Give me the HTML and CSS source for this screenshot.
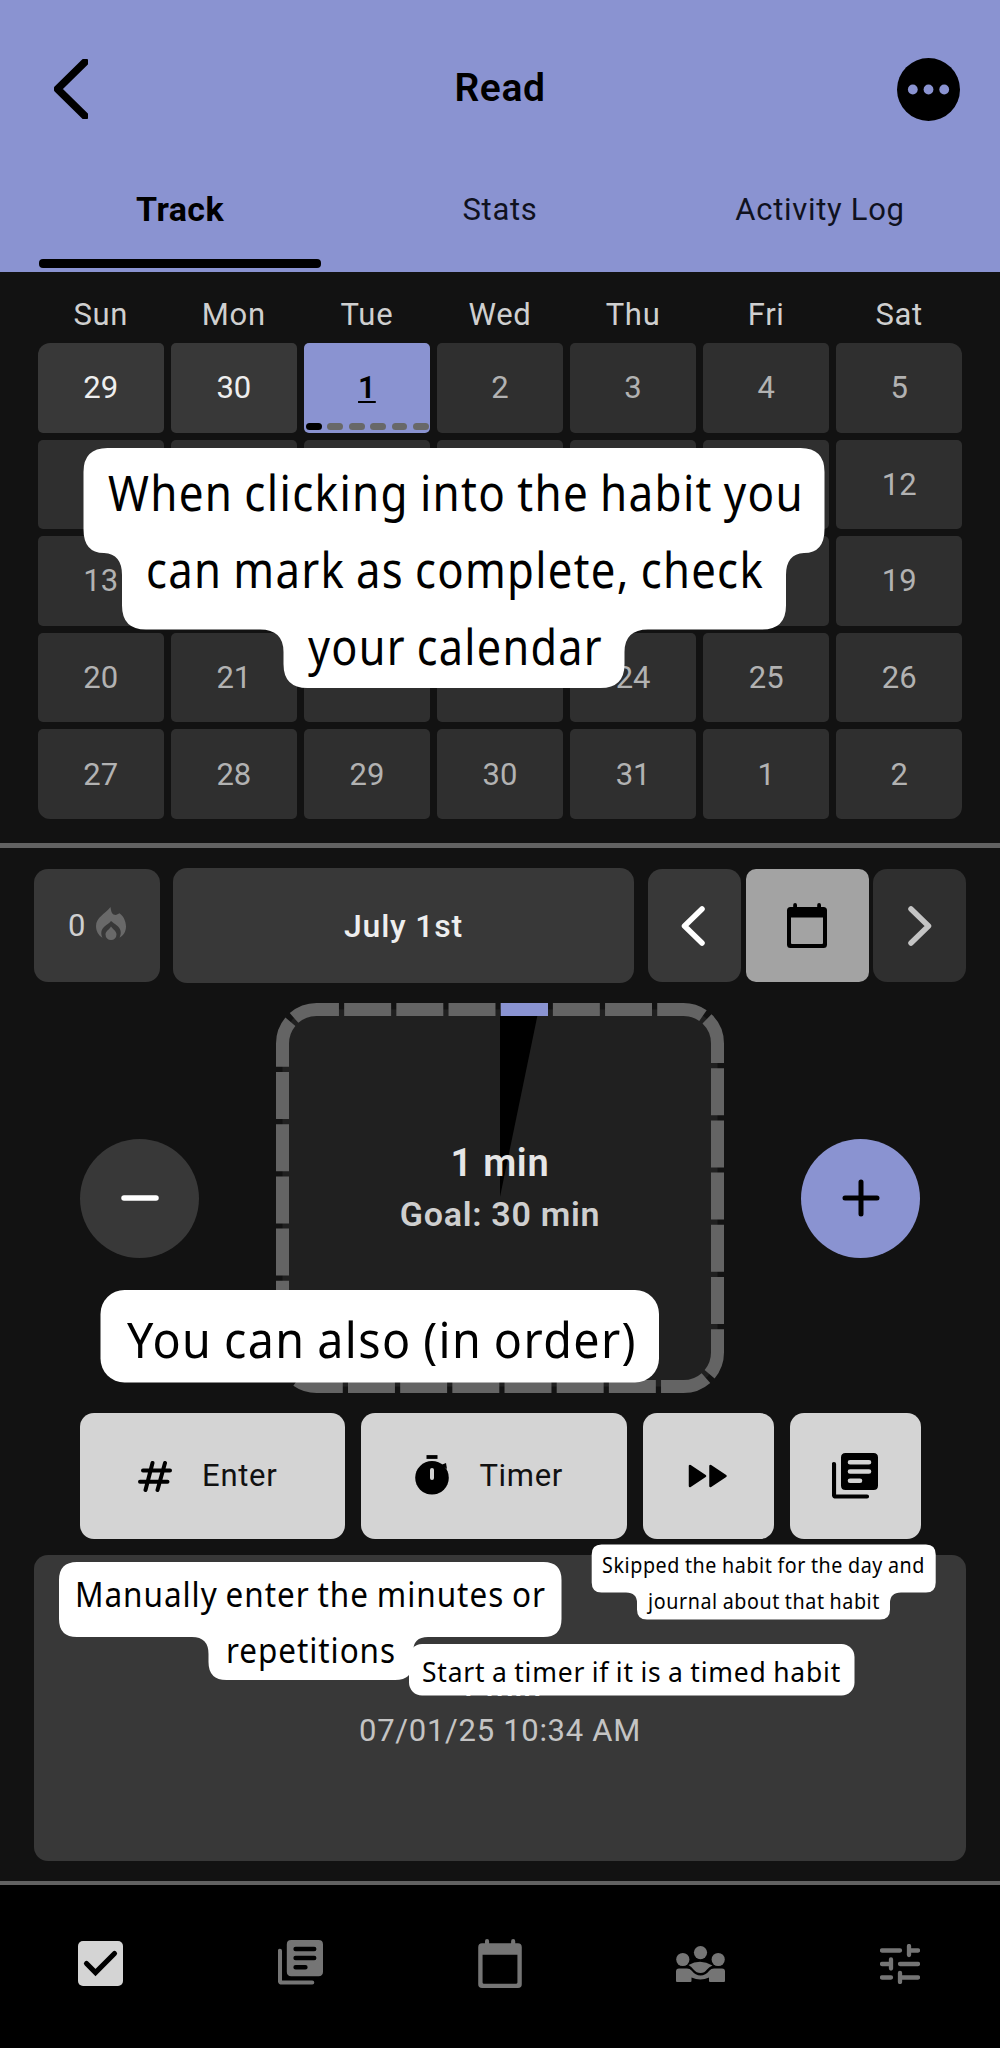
FILE: index.html
```html
<!DOCTYPE html>
<html lang="en">
<head>
<meta charset="utf-8">
<title>Read</title>
<link rel="stylesheet" href="styles.css">
</head>
<body>
<svg class="defs" width="0" height="0">
  <symbol id="library" viewBox="0 0 46 46">
    <path d="M2 11V41.500Q2 43.500 4 43.500H35" fill="none" stroke="currentColor" stroke-width="4.200" stroke-linecap="round" stroke-linejoin="round"/>
    <path fill="currentColor" fill-rule="evenodd" d="M13.500 0H41.500Q46 0 46 4.500V32.500Q46 37 41.500 37H13.500Q9 37 9 32.500V4.500Q9 0 13.500 0ZM18 6.900a2.300 2.300 0 0 0 0 4.600H37a2.300 2.300 0 0 0 0-4.600ZM18 16.200a2.300 2.300 0 0 0 0 4.600H37a2.300 2.300 0 0 0 0-4.600ZM18 25.500a2.300 2.300 0 0 0 0 4.600H28a2.300 2.300 0 0 0 0-4.600Z"/>
  </symbol>
  <symbol id="calendar" viewBox="0 0 40 45">
    <path fill="currentColor" fill-rule="evenodd" d="M6.200 4V2a1.900 1.900 0 0 1 3.800 0V4H30.200V2a1.900 1.900 0 0 1 3.800 0V4H36.500Q40 4 40 7.500V41.500Q40 45 36.500 45H3.500Q0 45 0 41.500V7.500Q0 4 3.500 4ZM4 14.500V40Q4 41 5 41H35Q36 41 36 40V14.500Z"/>
  </symbol>
</svg>

<header class="header">
  <div class="topbar">
    <svg class="back" width="34" height="60" viewBox="0 0 34 60"><path d="M31 3L3.500 30L31 57"/></svg>
    <h1 class="title">Read</h1>
    <svg class="more" width="63" height="63" viewBox="0 0 63 63"><circle cx="31.500" cy="31.500" r="31.500"/><g class="dots"><circle cx="15.800" cy="31.500" r="4.900"/><circle cx="31.500" cy="31.500" r="4.900"/><circle cx="47.200" cy="31.500" r="4.900"/></g></svg>
  </div>
  <nav class="tabs">
    <span class="tab active">Track</span>
    <span class="tab">Stats</span>
    <span class="tab">Activity Log</span>
  </nav>
</header>

<section class="month">
  <div class="weekdays"><span>Sun</span><span>Mon</span><span>Tue</span><span>Wed</span><span>Thu</span><span>Fri</span><span>Sat</span></div>
  <div class="days">
    <span class="day past">29</span><span class="day past">30</span>
    <span class="day today"><b>1</b><span class="ticks"><i class="done"></i><i></i><i></i><i></i><i></i><i></i></span></span>
    <span class="day">2</span><span class="day">3</span><span class="day">4</span><span class="day">5</span>
    <span class="day">6</span><span class="day">7</span><span class="day">8</span><span class="day">9</span><span class="day">10</span><span class="day">11</span><span class="day">12</span>
    <span class="day">13</span><span class="day">14</span><span class="day">15</span><span class="day">16</span><span class="day">17</span><span class="day">18</span><span class="day">19</span>
    <span class="day">20</span><span class="day">21</span><span class="day">22</span><span class="day">23</span><span class="day">24</span><span class="day">25</span><span class="day">26</span>
    <span class="day">27</span><span class="day">28</span><span class="day">29</span><span class="day">30</span><span class="day">31</span><span class="day">1</span><span class="day">2</span>
  </div>
</section>

<main class="tracker">
  <div class="datebar">
    <div class="streak">0
      <svg width="30" height="33" viewBox="0 0 30 33"><path fill="#696969" d="M14.500 0C15 3.500 15.500 7 18.500 7.800C20.500 8.200 22 7 23.500 6.200C27.500 9 30 14.500 30 19.500C30 24.500 27.500 28.500 23.500 30.800C26 25.500 24.500 21.500 21.500 19C18.500 16.500 16 15 15 14C13.500 16 11 17.500 8.500 19.500C5 22.500 4.500 26.500 6.500 30.800C2.500 28.500 0 24 0 19C0 10.500 9 7 14.500 0ZM15 19.500C17 22.500 20.500 24 20.500 27.500A5.500 5.500 0 0 1 9.500 27.500C9.500 24 13.500 22.500 15 19.500Z"/></svg>
    </div>
    <div class="date">July 1st</div>
    <div class="switcher">
      <div class="prev"><svg width="24" height="40" viewBox="0 0 24 40"><path d="M21 3L3.500 20L21 37"/></svg></div>
      <div class="pick"><svg width="40" height="45"><use href="#calendar"/></svg></div>
      <div class="next"><svg width="24" height="40" viewBox="0 0 24 40"><path d="M3 3L20.500 20L3 37"/></svg></div>
    </div>
  </div>

  <div class="counter">
    <div class="round minus"><svg width="40" height="40" viewBox="0 0 40 40"><path d="M4 20H36"/></svg></div>
    <div class="dial">
      <svg class="ring" width="448" height="390" viewBox="0 0 448 390">
        <rect x="6.500" y="6.500" width="435" height="377" rx="34" fill="#202020"/>
        <path d="M224 6.500H262.700L224 194Z" fill="#000"/>
        <path class="segments" d="M224.700 6.500H407.500A34 34 0 0 1 441.500 40.500V349.500A34 34 0 0 1 407.500 383.500H40.500A34 34 0 0 1 6.500 349.500V40.500A34 34 0 0 1 40.500 6.500H224.700" pathLength="300" stroke-dasharray="9 1"/>
        <path class="segment-done" d="M224.800 6.500H272"/>
      </svg>
      <div class="readout"><strong>1 min</strong><span>Goal: 30 min</span></div>
    </div>
    <div class="round plus"><svg width="40" height="40" viewBox="0 0 40 40"><path d="M4 20H36M20 4V36"/></svg></div>
  </div>

  <div class="actions">
    <div class="action wide">
      <svg width="34" height="31" viewBox="0 0 34 31"><path d="M14.500 2L7.500 29M27 2L19.500 29M5 9.500H32M2 20.800H29.500" fill="none" stroke="#000" stroke-width="4" stroke-linecap="round"/></svg>
      <span>Enter</span>
    </div>
    <div class="action wide timer">
      <svg width="34" height="40" viewBox="0 0 34 40"><path d="M11.500 2H22.500" stroke="#000" stroke-width="3.800"/><circle cx="17" cy="22.800" r="16.800"/><path d="M26 10L31 8L32 14Z"/><path d="M17 15V23" stroke="#d4d4d4" stroke-width="4" stroke-linecap="round"/></svg>
      <span>Timer</span>
    </div>
    <div class="action"><svg width="40" height="24" viewBox="0 0 40 24"><path d="M2 2V22L17 12ZM22.500 2V22L37.500 12Z" stroke="#000" stroke-width="2.500" stroke-linejoin="round"/></svg></div>
    <div class="action"><svg class="journal" width="46" height="46"><use href="#library"/></svg></div>
  </div>

  <div class="entry"><span class="amount">1 min</span><span class="stamp">07/01/25 10:34 AM</span></div>
</main>

<footer class="navbar">
  <div><svg width="45" height="45" viewBox="0 0 45 45"><rect width="45" height="45" rx="5" fill="#d4d4d4"/><path d="M8.500 22.500L17.500 31.500L36.500 12.500" fill="none" stroke="#000" stroke-width="5.200" stroke-linecap="round"/></svg></div>
  <div><svg class="lib" width="45" height="45"><use href="#library"/></svg></div>
  <div><svg width="44" height="49"><use href="#calendar"/></svg></div>
  <div><svg width="49" height="36" viewBox="0 0 49 36"><g fill="#757575"><circle cx="24.500" cy="6.600" r="6.600"/><circle cx="6.800" cy="13.500" r="6.600"/><circle cx="42.200" cy="13.500" r="6.600"/><path d="M12.500 19Q24.500 12.500 36.500 19.500Q33 21 31 23.500Q28.500 27 24.500 27T17.500 23.500Q15.500 20.500 12.500 19Z"/><path d="M0 35V25.500Q0 22.500 3 22.500H11Q14 22.500 15.500 24.500Q19.500 29.500 24.500 29.500T33.500 24.500Q35 22.500 38 22.500H46Q49 22.500 49 25.500V35Q49 36 48 36H34Q33 36 33 35V31.500Q24.500 35.500 15.500 31.500V35Q15.500 36 14.500 36H1Q0 36 0 35Z"/></g></svg></div>
  <div><svg width="40" height="40" viewBox="0 0 40 40"><path d="M2 6.500H20M29 6.500H38M29 2V11M2 20H11M11 15.500V24.500M20 20H38M2 33.500H11M20 33.500H38M20 29V38" fill="none" stroke="#757575" stroke-width="4.300" stroke-linecap="round"/></svg></div>
</footer>

<svg class="callout callout-intro" width="742" height="240" viewBox="83 448 742 240">
  <path d="M107.500 448H800.500Q824.500 448 824.500 472V529Q824.500 553 804 553Q786 554 786 575V605.500Q786 629.500 762 629.500H648Q624.500 629.500 624.500 652V664Q624.500 688 600.500 688H307.500Q283.500 688 283.500 664V652Q283.500 629.500 260 629.500H146Q122 629.500 122 605.500V575Q122 554 104 553Q83.500 553 83.500 529V472Q83.500 448 107.500 448Z"/>
  <text x="108" y="510.500" textLength="696" lengthAdjust="spacingAndGlyphs">When clicking into the habit you</text>
  <text x="146" y="587.500" textLength="618" lengthAdjust="spacingAndGlyphs">can mark as complete, check</text>
  <text x="308" y="664.500" textLength="295" lengthAdjust="spacingAndGlyphs">your calendar</text>
</svg>
<svg class="callout callout-also" width="559" height="93" viewBox="100 1290 559 93">
  <rect x="100.500" y="1290" width="558.500" height="92.500" rx="24"/>
  <text x="127" y="1357.500" textLength="510" lengthAdjust="spacingAndGlyphs">You can also (in order)</text>
</svg>
<svg class="callout callout-enter" width="504" height="118" viewBox="59 1562 504 118">
  <path d="M77 1562H543.500Q561.500 1562 561.500 1580V1619Q561.500 1637 543.500 1637H428Q413 1637 413 1652V1662Q413 1680 395 1680H226.500Q208.500 1680 208.500 1662V1654Q208.500 1637 192 1637H77Q59 1637 59 1619V1580Q59 1562 77 1562Z"/>
  <text x="75" y="1606.500" textLength="471" lengthAdjust="spacingAndGlyphs">Manually enter the minutes or</text>
  <text x="226" y="1663" textLength="170" lengthAdjust="spacingAndGlyphs">repetitions</text>
</svg>
<svg class="callout callout-timer" width="446" height="52" viewBox="409 1643.500 446 52">
  <rect x="409" y="1643.500" width="445.500" height="51.500" rx="13"/>
  <text x="422" y="1681.500" textLength="419" lengthAdjust="spacingAndGlyphs">Start a timer if it is a timed habit</text>
</svg>
<svg class="callout callout-skip" width="345" height="76" viewBox="591 1544 345 76">
  <path d="M601.500 1544.500H926Q935.700 1544.500 935.700 1554.500V1582.500Q935.700 1592.500 926 1592.500H901Q890 1592.500 890 1603V1609.500Q890 1619.500 880 1619.500H647Q637 1619.500 637 1609.500V1603Q637 1592.500 626 1592.500H601.500Q591.700 1592.500 591.700 1582.500V1554.500Q591.700 1544.500 601.500 1544.500Z"/>
  <text x="602" y="1572.500" textLength="323" lengthAdjust="spacingAndGlyphs">Skipped the habit for the day and</text>
  <text x="648" y="1609" textLength="232" lengthAdjust="spacingAndGlyphs">journal about that habit</text>
</svg>
</body>
</html>
```
FILE: styles.css
```css
* { box-sizing: border-box; }
body {
  position: relative;
  margin: 0;
  width: 1000px;
  height: 2048px;
  overflow: hidden;
  background: #121212;
  color: #cfcfcf;
  font-family: Roboto, "Liberation Sans", sans-serif;
  font-size: 31px;
  letter-spacing: .7px;
}
svg { display: block; flex: none; }
.defs { position: absolute; }

.header { height: 272px; background: #8a93d1; color: #000; }
.topbar {
  height: 149px;
  padding: 29px 40px 0 54px;
  display: grid;
  grid-template-columns: 63px 1fr 63px;
  align-items: center;
}
.back path { fill: none; stroke: #000; stroke-width: 7.500; stroke-linecap: round; stroke-linejoin: round; }
.dots { fill: #8a93d1; }
.title { margin: 0 0 3px; padding-right: 14px; text-align: center; font-size: 39px; font-weight: 650; letter-spacing: .6px; }
.tabs { height: 120px; padding: 0 20px; display: grid; grid-template-columns: repeat(3, 1fr); }
.tab { position: relative; display: flex; align-items: center; justify-content: center; color: #10121f; }
.tab.active { color: #000; font-size: 34px; font-weight: 700; letter-spacing: .4px; }
.tab.active::after {
  content: "";
  position: absolute;
  left: 19px;
  right: 19px;
  bottom: 1px;
  height: 9px;
  border-radius: 4px;
  background: #000;
}

.month { height: 576px; padding: 14px 38px 0; border-bottom: 5px solid #626262; }
.weekdays, .days { display: grid; grid-template-columns: repeat(7, 1fr); column-gap: 7.500px; text-align: center; }
.weekdays { line-height: 57px; height: 57px; }
.days { grid-auto-rows: 89.500px; row-gap: 7.100px; }
.day {
  display: flex;
  align-items: center;
  justify-content: center;
  position: relative;
  border-radius: 5px;
  background: #2f2f2f;
  color: #b2b2b2;
  letter-spacing: 0;
}
.day.past { background: #383838; color: #eee; }
.day.today { background: #8a93d1; color: #000; }
.today b { font-weight: 600; text-decoration: underline; text-decoration-thickness: 2px; text-underline-offset: 3px; }
.day:first-child { border-top-left-radius: 12px; }
.day:nth-child(7) { border-top-right-radius: 12px; }
.day:nth-child(29) { border-bottom-left-radius: 12px; }
.day:last-child { border-bottom-right-radius: 12px; }
.ticks { position: absolute; left: 2px; right: 1px; bottom: 2.500px; display: flex; gap: 5.500px; }
.ticks i { flex: 1; height: 7px; border-radius: 3.500px; background: #686868; }
.ticks .done { background: #000; }

.tracker { height: 1033px; padding: 20px 34px 0; }
.datebar { height: 115px; display: flex; align-items: center; }
.streak, .date, .prev, .pick, .next { display: flex; align-items: center; justify-content: center; border-radius: 14px; background: #383838; }
.streak { width: 126px; height: 113px; gap: 10px; }
.streak svg { margin-top: -4px; }
.date { width: 461px; height: 115px; margin: 0 14px 0 13px; color: #eee; font-size: 32px; font-weight: 500; letter-spacing: .8px; }
.switcher { display: flex; gap: 4.500px; flex: 1; height: 113px; }
.prev, .next { width: 93px; }
.pick { flex: 1; background: #a3a3a3; color: #000; border-radius: 10px; }
.prev path, .next path { fill: none; stroke: #fff; stroke-width: 5.500; stroke-linecap: round; stroke-linejoin: round; }
.prev { padding-right: 3px; }
.next { background: #2f2f2f; }
.next path { stroke: #c4c4c4; }

.counter { height: 390px; margin-top: 20px; padding: 0 46px; display: flex; align-items: center; justify-content: space-between; }
.round { width: 119px; height: 119px; border-radius: 50%; display: grid; place-items: center; background: #383838; }
.round path { fill: none; stroke: #fff; stroke-width: 5.500; stroke-linecap: round; }
.plus { background: #8a93d1; }
.plus path { stroke: #000; stroke-width: 5; }
.dial { display: grid; }
.ring, .readout { grid-area: 1 / 1; }
.segments { fill: none; stroke: #646464; stroke-width: 13; }
.segment-done { stroke: #8a93d1; stroke-width: 13; }
.readout { display: flex; flex-direction: column; align-items: center; padding-top: 137px; font-weight: 650; z-index: 1; }
.readout strong { font-size: 38px; font-weight: 650; line-height: 46px; color: #e6e6e6; }
.readout span { font-size: 34px; line-height: 56px; }

.actions { height: 126px; margin-top: 20px; padding: 0 45.500px; display: flex; gap: 16px; color: #111; }
.action { width: 131px; display: flex; align-items: center; justify-content: center; border-radius: 14px; background: #d4d4d4; }
.wide { flex: 1; gap: 30px; padding: 0 9px 2px 0; }
.wide svg { margin-top: 2px; }
.wide.timer svg { margin-top: 0; }
.journal { color: #000; }

.entry { height: 306px; margin-top: 16px; display: flex; flex-direction: column; align-items: center; padding-top: 111px; border-radius: 14px; background: #383838; color: #c4c4c4; }
.amount { line-height: 38px; font-size: 32px; font-weight: 500; color: #eee; }
.stamp { line-height: 54px; }

.navbar { height: 167px; border-top: 4px solid #626262; background: #000; color: #757575; display: grid; grid-template-columns: repeat(5, 1fr); place-items: center; padding-bottom: 6px; }
.navbar .lib { margin-top: -3px; }

.callout { position: absolute; overflow: visible; font-family: "Noto Sans", sans-serif; font-weight: 400; font-stretch: 87.500%; letter-spacing: .03em; word-spacing: -.04em; }
.callout path, .callout rect { fill: #fff; }
.callout text { fill: #000; }
.callout-intro { left: 83px; top: 448px; font-size: 50px; }
.callout-also { left: 100px; top: 1290px; font-size: 50px; }
.callout-enter { left: 59px; top: 1562px; font-size: 35px; }
.callout-timer { left: 409px; top: 1643.500px; font-size: 28px; }
.callout-skip { left: 591px; top: 1544px; font-size: 22px; }
```
